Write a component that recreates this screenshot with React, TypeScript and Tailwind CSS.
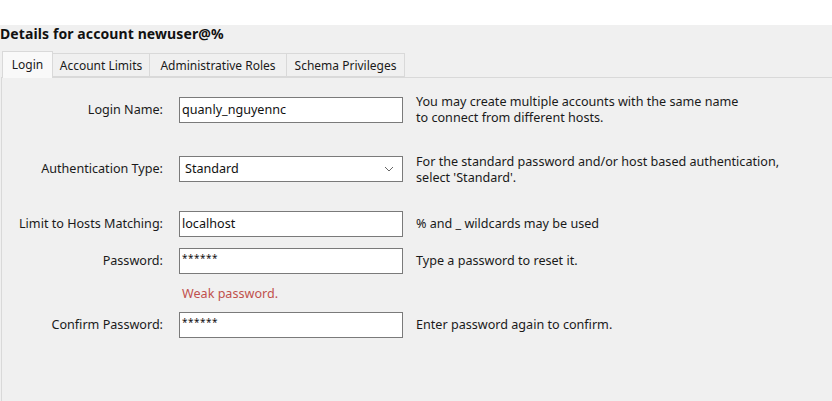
const font = { fontFamily: '"Noto Sans", "DejaVu Sans", sans-serif' };

type RowProps = {
  label: string;
  children: React.ReactNode;
  help?: React.ReactNode;
  className?: string;
};

const Row = ({ label, children, help, className = "" }: RowProps) => (
  <div className={`flex h-[26px] items-start ${className}`}>
    <div className="flex h-[26px] w-[161px] shrink-0 items-center justify-end text-[12.6px] text-[#1a1a1a]">{label}</div>
    <div className="ml-[16px] w-[224px] shrink-0">{children}</div>
    <div className="ml-[13px] text-[12.6px] leading-[16px] text-[#1a1a1a]">{help}</div>
  </div>
);

const TextBox = ({ value, pw = false }: { value: string; pw?: boolean }) => (
  <div className="flex h-[26px] w-full items-center border border-[#7a7a7a] bg-white px-[2px] text-[12.6px] text-[#111]">
    <span className={pw ? "relative -top-[3px] text-[10px] tracking-[0.5px]" : ""}>{value}</span>
  </div>
);

export default function App() {
  return (
    <div className="h-[401px] w-[832px] bg-white" style={font}>
      <div className="h-[25px]" />
      <div className="flex h-[376px] flex-col bg-[#f0f0f0]">
        <div className="h-[25px] pt-[1px] text-[14px] font-bold leading-[16px] tracking-[0.1px] text-[#111]">Details for account newuser@%</div>
        <div className="flex h-[27px] items-end pl-[2px] text-[12px] text-[#1a1a1a]">
          <div className="-mb-px z-10 flex h-[27px] w-[51px] items-center justify-center border border-b-0 border-[#d9d9d9] bg-[#f9f9f9]">Login</div>
          <div className="flex h-[24px] w-[97px] items-center justify-center border border-l-0 border-[#d9d9d9] bg-[#f0f0f0] pt-[2px]">Account Limits</div>
          <div className="flex h-[24px] w-[137px] items-center justify-center border border-l-0 border-[#d9d9d9] bg-[#f0f0f0] pt-[2px]">Administrative Roles</div>
          <div className="flex h-[24px] w-[118px] items-center justify-center border border-l-0 border-[#d9d9d9] bg-[#f0f0f0] pt-[2px]">Schema Privileges</div>
        </div>
        <div className="ml-px flex-1 border-l border-t border-[#d9d9d9] pt-[19px]">
          <Row
            label="Login Name:"
            help={<div className="-mt-[3px]">You may create multiple accounts with the same name<br />to connect from different hosts.</div>}
          >
            <TextBox value="quanly_nguyennc" />
          </Row>
          <Row
            className="mt-[33px]"
            label="Authentication Type:"
            help={<div className="-mt-[2px]">For the standard password and/or host based authentication,<br />select 'Standard'.</div>}
          >
            <div className="flex h-[26px] w-full items-center justify-between border border-[#7a7a7a] bg-white pl-[5px] pr-[8px] text-[12.6px] text-[#111]">
              <span>Standard</span>
              <svg width="10" height="6" viewBox="0 0 10 6" fill="none">
                <path d="M1 1l4 4 4-4" stroke="#666" strokeWidth="1" />
              </svg>
            </div>
          </Row>
          <Row
            className="mt-[29px]"
            label="Limit to Hosts Matching:"
            help={<div className="pt-[5px]">% and _ wildcards may be used</div>}
          >
            <TextBox value="localhost" />
          </Row>
          <Row className="mt-[11px]" label="Password:" help={<div className="pt-[5px]">Type a password to reset it.</div>}>
            <TextBox value="******" pw />
          </Row>
          <div className="ml-[180px] mt-[12px] h-[16px] text-[12.6px] leading-[16px] text-[#c0504d]">Weak password.</div>
          <Row className="mt-[10px]" label="Confirm Password:" help={<div className="pt-[5px]">Enter password again to confirm.</div>}>
            <TextBox value="******" pw />
          </Row>
        </div>
      </div>
    </div>
  );
}
